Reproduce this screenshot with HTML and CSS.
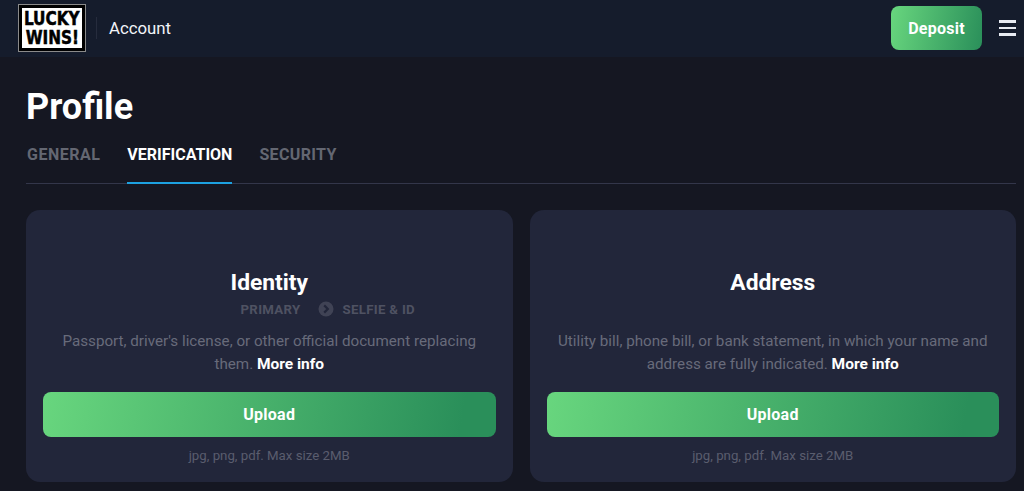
FILE: index.html
```html
<!DOCTYPE html>
<html lang="en">
<head>
<meta charset="utf-8">
<title>Profile</title>
<link rel="stylesheet" href="styles.css">
</head>
<body>
<header class="topbar">
  <div class="brand">
    <div class="logo"><span>LUCKY</span><span>WINS!</span></div>
    <div class="brand-sep"></div>
    <div class="brand-title">Account</div>
  </div>
  <div class="top-actions">
    <button class="deposit">Deposit</button>
    <div class="burger"><i></i><i></i><i></i></div>
  </div>
</header>
<main class="content">
  <h1 class="page-title">Profile</h1>
  <nav class="tabs">
    <a class="tab tab-general">GENERAL</a>
    <a class="tab active">VERIFICATION</a>
    <a class="tab tab-security">SECURITY</a>
  </nav>
  <section class="cards">
    <article class="card">
      <h2 class="card-title">Identity</h2>
      <div class="steps">
        <span>PRIMARY</span>
        <svg class="step-icon" width="16" height="16" viewBox="0 0 16 16"><circle cx="8" cy="8" r="7.5" fill="#404355"/><path d="M6.2 4.4 9.8 8l-3.6 3.6" fill="none" stroke="#22263a" stroke-width="2.2"/></svg>
        <span>SELFIE &amp; ID</span>
      </div>
      <p class="desc">Passport, driver's license, or other official document replacing them. <b>More info</b></p>
      <button class="upload">Upload</button>
      <div class="note">jpg, png, pdf. Max size 2MB</div>
    </article>
    <article class="card">
      <h2 class="card-title">Address</h2>
      <div class="steps"></div>
      <p class="desc">Utility bill, phone bill, or bank statement, in which your name and address are fully indicated. <b>More info</b></p>
      <button class="upload">Upload</button>
      <div class="note">jpg, png, pdf. Max size 2MB</div>
    </article>
  </section>
</main>
</body>
</html>
```
FILE: styles.css
```css
* { box-sizing: border-box; }
html, body { margin: 0; height: 100%; }
body { background: #151722; color: #fff; font-family: Roboto, "Liberation Sans", sans-serif; overflow: hidden; }
.topbar { height: 57px; background: #151c2c; display: flex; align-items: center; justify-content: space-between; padding: 0 8px 1px 18px; }
.brand { display: flex; align-items: center; }
.logo { width: 68px; height: 48px; background: #fff; border: 4px solid #000; outline: 1px solid #8a8a8a; outline-offset: -1px; display: flex; flex-direction: column; align-items: center; justify-content: center; color: #000; font-family: "DejaVu Sans Condensed", "DejaVu Sans", sans-serif; font-weight: 700; font-size: 20px; line-height: 19px; }
.logo span { display: block; transform: scaleX(0.85); -webkit-text-stroke: 0.5px #000; }
.brand-sep { width: 1px; height: 22px; background: #262c3d; margin: 0 12px 0 10px; }
.brand-title { font-size: 16.8px; color: #f2f4f8; }
.top-actions { display: flex; align-items: center; gap: 17px; }
.deposit { width: 91px; height: 44px; border: 0; border-radius: 8px; background: linear-gradient(100deg, #68d67e, #2a8f5a); color: #fff; font: 700 16px Roboto, sans-serif; letter-spacing: 0.25px; }
.burger { width: 17px; display: flex; flex-direction: column; gap: 4px; }
.burger i { height: 2.5px; background: #e8ebf2; display: block; }
.content { padding: 0 8px 0 26px; }
.page-title { margin: 31px 0 0; font-size: 36px; line-height: 38px; font-weight: 700; }
.tabs { margin-top: 11px; height: 47px; display: flex; gap: 27px; border-bottom: 1px solid #33364a; }
.tab { height: 47px; padding-top: 9px; font-size: 16px; line-height: 18px; font-weight: 700; color: #646772; }
.tab-general { letter-spacing: 0.5px; margin-left: 1px; }
.tab-security { letter-spacing: 0.35px; }
.tab.active { color: #fff; border-bottom: 2px solid #1da1e0; }
.cards { margin-top: 26px; display: flex; gap: 17px; }
.card { flex: 1; height: 272px; background: #22263a; border-radius: 14px; padding: 60px 17px 0; text-align: center; }
.card-title { margin: 0; font-size: 22.8px; line-height: 26px; font-weight: 700; }
.steps { height: 20px; margin-top: 3px; margin-left: 117px; display: flex; justify-content: center; align-items: center; gap: 9px; color: #4f5262; font-size: 13.25px; font-weight: 700; letter-spacing: 0.3px; }
.step-icon { margin-left: 8px; }
.desc { margin: 11px 0 0; font-size: 15.2px; line-height: 23px; color: #686b7a; height: 46px; }
.desc b { color: #fff; font-weight: 700; font-size: 15.5px; }
.upload { display: block; width: 100%; height: 45px; margin-top: 16px; border: 0; border-radius: 8px; background: linear-gradient(100deg, #68d67e, #2a8f5a 92%); color: #fff; font: 700 16px Roboto, sans-serif; letter-spacing: 0.25px; }
.note { margin-top: 11px; font-size: 13.25px; line-height: 16px; color: #5a5d6e; }
```
